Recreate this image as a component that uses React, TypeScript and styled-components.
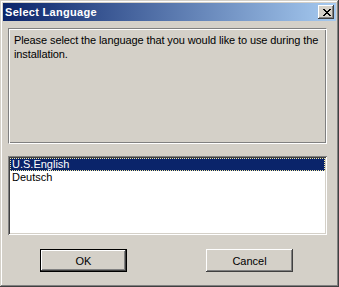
import React from "react";
import styled, { createGlobalStyle } from "styled-components";

const GlobalStyle = createGlobalStyle`
	body {
		margin: 0;
		background: #d4d0c8;
		font-family: "Liberation Sans", Arial, sans-serif;
		font-size: 11px;
	}
`;

const Window = styled.div`
	width: 339px;
	height: 287px;
	box-sizing: border-box;
	padding: 3px;
	background: #d4d0c8;
	box-shadow: inset -1px -1px #404040, inset 1px 1px #d4d0c8,
		inset -2px -2px #808080, inset 2px 2px #ffffff;
	display: flex;
	flex-direction: column;
`;

const TitleBar = styled.div`
	height: 18px;
	display: flex;
	align-items: center;
	justify-content: space-between;
	padding: 0 2px 0 2px;
	background: linear-gradient(to right, #0a246a, #a6caf0);
`;

const Title = styled.span`
	color: #ffffff;
	font-weight: bold;
	font-size: 11px;
	letter-spacing: 0.3px;
`;

const CloseButton = styled.div`
	width: 16px;
	height: 14px;
	box-sizing: border-box;
	background: #d4d0c8;
	box-shadow: inset -1px -1px #404040, inset 1px 1px #ffffff,
		inset -2px -2px #808080;
	display: flex;
	align-items: center;
	justify-content: center;
	padding-left: 1px;
`;

const Panel = styled.div`
	margin: 7px 0 0 5px;
	width: 319px;
	height: 116px;
	box-sizing: border-box;
	border: 1px solid #808080;
	border-right-color: #ffffff;
	border-bottom-color: #ffffff;
	box-shadow: inset 1px 1px #ffffff, inset -1px -1px #808080;
	padding: 4px 0 0 5px;
	color: #000000;
	line-height: 14px;
	letter-spacing: -0.1px;
`;

const ListBox = styled.div`
	margin: 12px 0 0 5px;
	width: 319px;
	height: 79px;
	box-sizing: border-box;
	background: #ffffff;
	padding: 2px;
	box-shadow: inset 1px 1px #808080, inset -1px -1px #ffffff,
		inset 2px 2px #404040, inset -2px -2px #d4d0c8;
`;

const ListItem = styled.div<{ $selected?: boolean }>`
	height: 13px;
	line-height: 13px;
	padding-left: 2px;
	color: ${(p) => (p.$selected ? "#ffffff" : "#000000")};
	background: ${(p) => (p.$selected ? "#0a246a" : "transparent")};
	outline: ${(p) => (p.$selected ? "1px dotted #f4e9a0" : "none")};
	outline-offset: -1px;
`;

const ButtonRow = styled.div`
	display: flex;
	margin: 14px 0 0 37px;
	gap: 79px;
`;

const Button = styled.div<{ $default?: boolean }>`
	width: 87px;
	height: 23px;
	box-sizing: border-box;
	display: flex;
	align-items: center;
	justify-content: center;
	color: #000000;
	background: #d4d0c8;
	border: ${(p) => (p.$default ? "1px solid #000000" : "none")};
	box-shadow: inset -1px -1px #404040, inset 1px 1px #ffffff,
		inset -2px -2px #808080;
`;

const CloseGlyph = () => (
	<svg width="8" height="7" viewBox="0 0 8 7" shapeRendering="crispEdges">
		<path
			fill="#000"
			d="M0 0h2v1H0zM6 0h2v1H6zM1 1h2v1H1zM5 1h2v1H5zM2 2h4v1H2zM3 3h2v1H3zM2 4h4v1H2zM1 5h2v1H1zM5 5h2v1H5zM0 6h2v1H0zM6 6h2v1H6z"
		/>
	</svg>
);

const App = () => {
	return (
		<>
			<GlobalStyle />
			<Window>
				<TitleBar>
					<Title>Select Language</Title>
					<CloseButton>
						<CloseGlyph />
					</CloseButton>
				</TitleBar>
				<Panel>
					Please select the language that you would like to use during the
					installation.
				</Panel>
				<ListBox>
					<ListItem $selected>U.S.English</ListItem>
					<ListItem>Deutsch</ListItem>
				</ListBox>
				<ButtonRow>
					<Button $default>OK</Button>
					<Button>Cancel</Button>
				</ButtonRow>
			</Window>
		</>
	);
};

export default App;
